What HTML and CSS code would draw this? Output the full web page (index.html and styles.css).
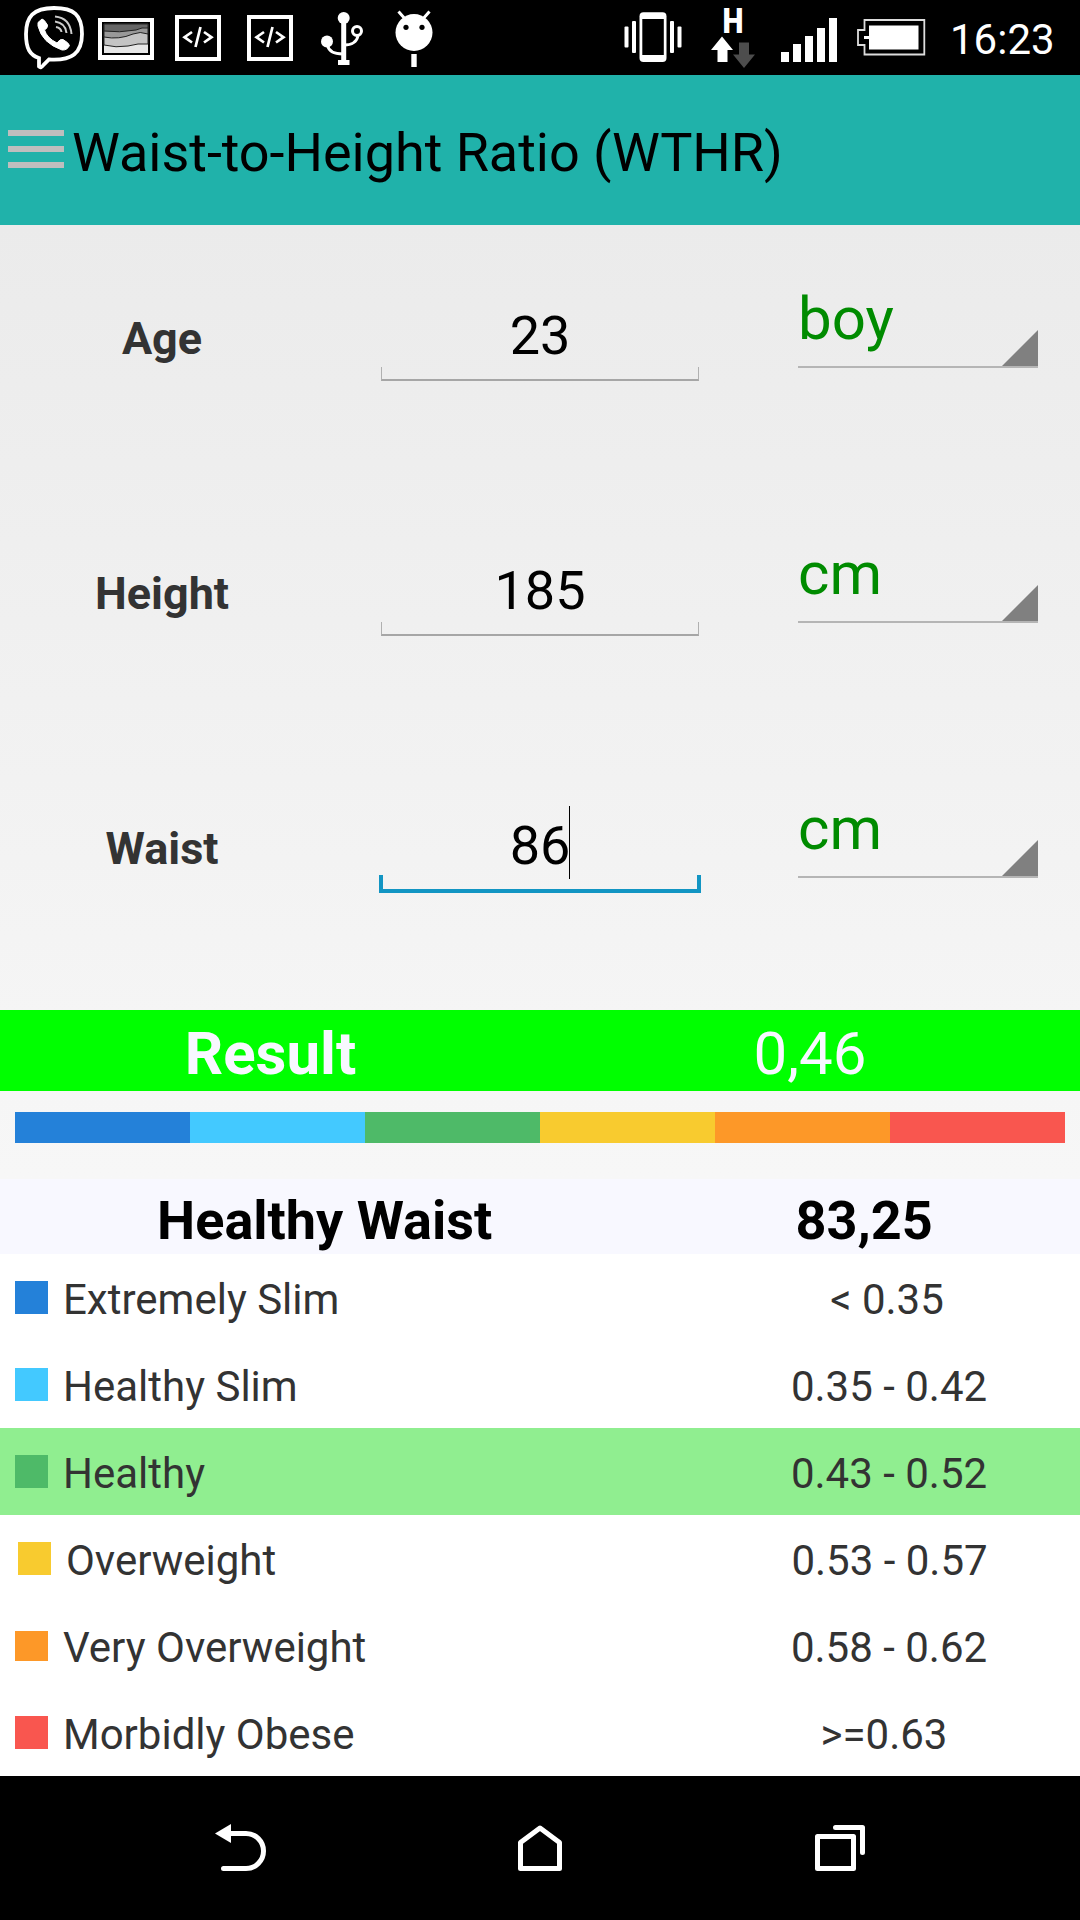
FILE: index.html
```html
<!DOCTYPE html>
<html lang="en">
<head>
  <meta charset="UTF-8" />
  <meta name="viewport" content="width=device-width, initial-scale=1.0" />
  <title>Waist-to-Height Ratio (WTHR)</title>
  <link rel="stylesheet" href="styles.css">
</head>
<body>
  <div class="status-bar">
    <div class="status-icons">
      <!-- viber -->
      <svg width="90" height="75" viewBox="0 0 90 75" fill="none" stroke="#fff">
        <path d="M54 8C33 8 26 17 26 34C26 49 30 55 39 58V66.500Q41 68.500 43.500 65L49 59.500C72 61 82 53 82 34C82 15 74 8 54 8Z" stroke-width="3.800" />
        <path d="M38 22.500L42 19Q44 19 47.500 25Q48 28 44.500 30Q47 38 57 43Q60 38.500 63 39.500Q69 43 69.500 45.500Q67 50.500 62 50Q42 43 38 26Z" fill="#fff" stroke-width="1" />
        <path d="M55 16.500Q70 18 71.500 34M55 21.500Q65.500 23 66.500 33M56 27Q61 28 61.500 32" stroke="#ccc" stroke-width="2" />
      </svg>
      <!-- gallery -->
      <svg width="72" height="75" viewBox="90 0 72 75">
        <rect x="98" y="18" width="56" height="42" fill="#fff" />
        <rect x="102" y="22" width="48" height="33" fill="#000" />
        <rect x="104" y="24" width="44" height="29" fill="#e6e6e6" />
        <path d="M104 24H148V44Q138 43 128 46Q116 48 104 45Z" fill="#c4c4c4" stroke="#222" stroke-width="1" />
        <path d="M104 24H148V34Q140 31 133 34Q119 40 104 37Z" fill="#999" stroke="#222" stroke-width="1" />
        <path d="M104 24H148V28Q142 27 136 30Q119 33 104 31Z" fill="#666" stroke="#222" stroke-width="1" />
      </svg>
      <!-- dev tools -->
      <svg width="72" height="75" viewBox="162 0 72 75" fill="none" stroke="#fff">
        <rect x="177" y="17" width="42" height="42" stroke-width="4" />
        <path d="M192 32L184.500 37.200L192 42.500M204 32L211.500 37.200L204 42.500M200.500 27L195.500 47" stroke-width="2.700" />
      </svg>
      <svg width="72" height="75" viewBox="162 0 72 75" fill="none" stroke="#fff">
        <rect x="177" y="17" width="42" height="42" stroke-width="4" />
        <path d="M192 32L184.500 37.200L192 42.500M204 32L211.500 37.200L204 42.500M200.500 27L195.500 47" stroke-width="2.700" />
      </svg>
      <!-- usb -->
      <svg width="72" height="75" viewBox="306 0 72 75" fill="none" stroke="#fff">
        <circle cx="343.700" cy="18" r="6" fill="#fff" stroke="none" />
        <circle cx="327" cy="41.500" r="6" fill="#fff" stroke="none" />
        <circle cx="357" cy="31" r="4.500" stroke-width="3" />
        <path d="M343.700 20V62" stroke-width="5" />
        <path d="M338 62.500H349.500" stroke-width="5" />
        <path d="M327.500 45Q329 54 343 54M358 36Q356 45 344 45" stroke-width="2.800" />
      </svg>
      <!-- debug robot -->
      <svg width="72" height="75" viewBox="378 0 72 75">
        <circle cx="414" cy="32.500" r="18.500" fill="#fff" />
        <path d="M398.500 11.500L406 20M429.500 11.500L422 20" stroke="#fff" stroke-width="3" />
        <circle cx="406" cy="27.300" r="2.600" fill="#000" />
        <circle cx="422" cy="27.300" r="2.600" fill="#000" />
        <rect x="411.300" y="54" width="5.400" height="13" fill="#fff" />
      </svg>
    </div>

    <div class="status-icons">
      <!-- vibrate -->
      <svg width="84" height="75" viewBox="612 0 84 75" fill="#fff">
        <rect x="624.500" y="26.500" width="4" height="21" rx="1" />
        <rect x="632" y="21" width="4" height="32" rx="1" />
        <rect x="639.500" y="12.300" width="27" height="49.700" rx="4" />
        <rect x="642.300" y="19" width="21.500" height="36" fill="#000" />
        <rect x="670" y="21" width="4" height="32" rx="1" />
        <rect x="677.500" y="26.500" width="4" height="21" rx="1" />
      </svg>
      <!-- mobile data -->
      <svg width="72" height="75" viewBox="696 0 72 75">
        <text class="net-type" x="722.500" y="33" textLength="21" lengthAdjust="spacingAndGlyphs">H</text>
        <path d="M722 36.500L733 50H727.500V62H717.500V50H711Z" fill="#fff" />
        <path d="M739 42.500H749V54.500H755L744 68L733 54.500H739Z" fill="#4d4d4d" />
      </svg>
      <!-- signal -->
      <svg width="78" height="75" viewBox="768 0 78 75" fill="#fff">
        <rect x="781" y="52" width="8" height="10" />
        <rect x="793" y="44" width="8" height="18" />
        <rect x="805" y="36" width="8" height="26" />
        <rect x="817" y="28" width="8" height="34" />
        <rect x="829" y="18" width="8" height="44" />
      </svg>
      <!-- battery -->
      <svg width="90" height="75" viewBox="846 0 90 75">
        <path d="M864.500 20H924.300V54.500H864.500V45H858V30H864.500Z" fill="none" stroke="#ddd" stroke-width="1.800" />
        <path d="M869 25.500H918.500V49.500H869V39H864V36H869Z" fill="#fff" />
      </svg>
      <span class="clock">16:23</span>
    </div>
  </div>

  <div class="title-bar">
    <div class="menu-icon"><i></i><i></i><i></i></div>
    <div class="title">Waist-to-Height Ratio (WTHR)</div>
  </div>

  <div class="content">
    <div class="form">
      <div class="form-row">
        <div class="label">Age</div>
        <div class="field">23</div>
        <div class="spinner">boy</div>
      </div>
      <div class="form-row">
        <div class="label">Height</div>
        <div class="field">185</div>
        <div class="spinner">cm</div>
      </div>
      <div class="form-row">
        <div class="label">Waist</div>
        <div class="field focused">86<span class="caret"></span></div>
        <div class="spinner">cm</div>
      </div>
    </div>

    <div class="result">
      <div class="result-label">Result</div>
      <div>0,46</div>
    </div>

    <div class="scale">
      <div class="extremely-slim"></div>
      <div class="healthy-slim"></div>
      <div class="healthy"></div>
      <div class="overweight"></div>
      <div class="very-overweight"></div>
      <div class="obese"></div>
    </div>

    <div class="healthy-waist">
      <div>Healthy Waist</div>
      <div>83,25</div>
    </div>
  </div>

  <div class="ranges">
    <div class="range">
      <div class="swatch extremely-slim"></div>
      <div class="range-name">Extremely Slim</div>
      <div class="range-value below">&lt; 0.35</div>
    </div>
    <div class="range">
      <div class="swatch healthy-slim"></div>
      <div class="range-name">Healthy Slim</div>
      <div class="range-value">0.35 - 0.42</div>
    </div>
    <div class="range active">
      <div class="swatch healthy"></div>
      <div class="range-name">Healthy</div>
      <div class="range-value">0.43 - 0.52</div>
    </div>
    <div class="range shifted">
      <div class="swatch overweight"></div>
      <div class="range-name">Overweight</div>
      <div class="range-value">0.53 - 0.57</div>
    </div>
    <div class="range">
      <div class="swatch short very-overweight"></div>
      <div class="range-name">Very Overweight</div>
      <div class="range-value">0.58 - 0.62</div>
    </div>
    <div class="range">
      <div class="swatch obese"></div>
      <div class="range-name">Morbidly Obese</div>
      <div class="range-value above">&gt;=0.63</div>
    </div>
  </div>

  <div class="nav-bar">
    <svg width="60" height="60" viewBox="210 1818 60 60" fill="none" stroke="#fff" stroke-width="5" stroke-linecap="round">
      <path d="M229 1833.500H246A17.500 17.500 0 0 1 246 1868.500H223.500" />
      <path d="M215 1833.500L231 1824V1843Z" fill="#fff" stroke="none" />
    </svg>
    <svg width="60" height="60" viewBox="510 1818 60 60" fill="none" stroke="#fff" stroke-width="5" stroke-linejoin="round">
      <path d="M540 1828L559.500 1842.500V1868.500H520.500V1842.500Z" />
    </svg>
    <svg width="60" height="60" viewBox="810 1818 60 60" fill="none" stroke="#fff" stroke-width="5" stroke-linecap="round" stroke-linejoin="round">
      <rect x="817.500" y="1836.500" width="36" height="32" />
      <path d="M835.500 1827.500H862.500V1852.500" />
    </svg>
  </div>
</body>
</html>
```
FILE: styles.css
```css
* {
  box-sizing: border-box;
}

body {
  margin: 0;
  width: 1080px;
  height: 1920px;
  font-family: Roboto, sans-serif;
  background-color: #fff;
  color: #000;
  display: flex;
  flex-direction: column;
}

svg {
  display: block;
}

.status-bar {
  height: 75px;
  background: #000;
  color: #fff;
  display: flex;
  justify-content: space-between;
}

.status-icons {
  display: flex;
}

.net-type {
  font-size: 35px;
  font-weight: 900;
  fill: #fff;
}

.clock {
  width: 144px;
  padding: 4px 0 0 14px;
  font-size: 42px;
  line-height: 71px;
}

.title-bar {
  height: 150px;
  padding-left: 8px;
  background: #20b2aa;
  display: flex;
  align-items: center;
  gap: 8px;
}

.menu-icon {
  width: 56px;
  padding-bottom: 2px;
  display: flex;
  flex-direction: column;
  gap: 10px;
}

.menu-icon i {
  height: 6px;
  background: #bebebe;
}

.title {
  padding-top: 5px;
  font-size: 54px;
  letter-spacing: -0.04px;
  white-space: nowrap;
}

.content {
  height: 1029px;
  background: linear-gradient(#ebebeb, #f8f8f8);
}

.form {
  height: 785px;
}

.form-row {
  height: 255px;
  display: grid;
  grid-template-columns: 324px 432px 324px;
  align-items: start;
}

.label {
  margin-top: 91px;
  font-size: 45px;
  line-height: 45px;
  font-weight: bold;
  text-align: center;
  color: #333;
}

.field {
  position: relative;
  height: 90px;
  margin: 66px 57px 0;
  font-size: 54px;
  line-height: 90px;
  text-align: center;
}

/* bracket under the input */
.field::after {
  content: "";
  position: absolute;
  left: 0;
  right: 0;
  bottom: 0;
  height: 12px;
  border: 1px solid #b0b0b0;
  border-top: none;
  border-bottom: 2px solid #a6a6a6;
}

.field.focused::after {
  left: -2px;
  right: -2px;
  bottom: -2px;
  height: 14px;
  border: 4px solid #1295c3;
  border-top: none;
}

.caret {
  position: absolute;
  top: 5px;
  margin-left: -1px;
  width: 1px;
  height: 73px;
  background: #000;
}

.spinner {
  position: relative;
  width: 240px;
  height: 82px;
  margin: 61px 0 0 42px;
  font-size: 60px;
  line-height: 66px;
  color: #008b00;
  border-bottom: 2px solid #b5b5b5;
}

.spinner::after {
  content: "";
  position: absolute;
  right: 0;
  bottom: 0;
  border-left: 36px solid transparent;
  border-bottom: 36px solid #808080;
}

.result {
  height: 81px;
  padding-top: 6px;
  background: #00ff00;
  color: #f8f8ff;
  font-size: 60px;
  line-height: 75px;
  text-align: center;
  display: grid;
  grid-template-columns: 1fr 1fr;
}

.result-label {
  padding-left: 1px;
  font-weight: bold;
}

.scale {
  height: 31px;
  margin: 21px 15px 36px;
  display: grid;
  grid-template-columns: repeat(6, 1fr);
}

.extremely-slim { background: #2481d9; }
.healthy-slim { background: #43c9ff; }
.healthy { background: #4eba68; }
.overweight { background: #f8cb2f; }
.very-overweight { background: #fd9828; }
.obese { background: #f9564f; }

.healthy-waist {
  height: 75px;
  padding: 8px 0 0 1px;
  background: #f8f8ff;
  font-size: 54px;
  line-height: 67px;
  font-weight: bold;
  text-align: center;
  display: grid;
  grid-template-columns: 3fr 2fr;
}

.range {
  height: 87px;
  padding-left: 15px;
  color: #333;
  font-size: 42px;
  line-height: 83px;
  display: flex;
}

.range.shifted {
  padding-left: 18px;
}

.range.active {
  background: #90ee90;
}

.swatch {
  width: 33px;
  height: 33px;
  margin: 27px 15px 0 0;
}

.swatch.short {
  height: 30px;
  margin-top: 29px;
}

.range-name {
  width: 635px;
  padding-top: 4px;
}

.range-value {
  width: 382px;
  padding-top: 4px;
  text-align: center;
}

.range-value.below {
  padding-right: 4px;
}

.range-value.above {
  padding-right: 10px;
}

.nav-bar {
  height: 144px;
  background: #000;
  display: flex;
  justify-content: center;
  align-items: center;
  gap: 240px;
}
```
